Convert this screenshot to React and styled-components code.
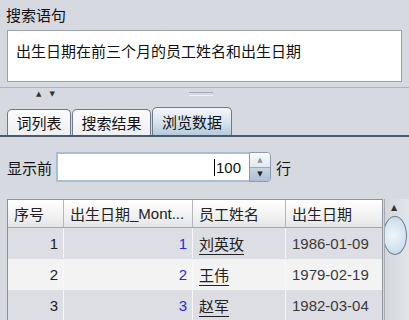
import React from "react";
import styled, { createGlobalStyle } from "styled-components";

const GlobalStyle = createGlobalStyle`
  body {
    margin: 0;
    background: #d6d9e0;
    font-family: "Noto Sans CJK SC", "Liberation Sans", sans-serif;
    color: #222;
  }
`;

const Page = styled.div`
  width: 409px;
  height: 320px;
  overflow: hidden;
  background: #d6d9e0;
`;

const SectionLabel = styled.div`
  height: 30px;
  line-height: 30px;
  padding-left: 6px;
  font-size: 15px;
  color: #111;
`;

const QueryBox = styled.div`
  box-sizing: border-box;
  height: 52px;
  margin: 0 7px 0 7px;
  padding: 9px 8px;
  background: #fff;
  border: 1px solid #9ca2aa;
  font-size: 15px;
  line-height: 22px;
  color: #111;
`;

const Splitter = styled.div`
  margin-top: 5px;
  height: 12px;
  border-top: 1px solid #aeb2b9;
  display: flex;
  align-items: center;
`;

const Arrows = styled.div`
  display: flex;
  gap: 8px;
  margin-left: 36px;
  font-size: 7px;
  color: #333;
  line-height: 7px;
  font-family: "DejaVu Sans", sans-serif;
`;

const Grip = styled.div`
  margin-left: 134px;
  width: 24px;
  height: 2px;
  border-top: 1px solid #a7abb3;
  border-bottom: 1px solid #f1f2f4;
`;

const TabRow = styled.div`
  margin-top: 4px;
  height: 31px;
  display: flex;
  align-items: flex-end;
  padding-left: 7px;
  border-bottom: 2px solid #4a5a6e;
`;

const Tab = styled.div`
  box-sizing: border-box;
  height: ${(p) => (p.$active ? 28 : 26)}px;
  width: ${(p) => p.$w}px;
  margin-right: 1px;
  border: 1px solid #6f7a88;
  border-bottom: none;
  border-radius: 5px 5px 0 0;
  background: ${(p) =>
    p.$active
      ? "linear-gradient(#f2f6fa, #d6e3ee 55%, #b6cadc)"
      : "linear-gradient(#fdfdfd, #eeeff1)"};
  font-size: 15px;
  line-height: ${(p) => (p.$active ? 28 : 26)}px;
  text-align: center;
  color: #111;
`;

const Controls = styled.div`
  display: flex;
  align-items: center;
  margin-top: 15px;
  padding-left: 7px;
  height: 30px;
`;

const InlineLabel = styled.span`
  font-size: 15px;
  color: #111;
  margin-right: ${(p) => p.$mr || 0}px;
  margin-left: ${(p) => p.$ml || 0}px;
`;

const NumberInput = styled.div`
  box-sizing: border-box;
  width: 193px;
  height: 30px;
  background: #fff;
  border: 2px solid #a9bed3;
  border-right: none;
  display: flex;
  align-items: center;
  justify-content: flex-end;
  padding-right: 8px;
  font-family: "Liberation Sans", sans-serif;
  font-size: 15px;
  color: #111;
`;

const Caret = styled.span`
  display: inline-block;
  width: 1px;
  height: 17px;
  background: #000;
  margin-right: 1px;
`;

const Spinner = styled.div`
  box-sizing: border-box;
  width: 22px;
  height: 30px;
  border: 1px solid #8c9cae;
  border-radius: 0 4px 4px 0;
  display: flex;
  flex-direction: column;
  overflow: hidden;
`;

const SpinButton = styled.div`
  flex: 1;
  display: flex;
  align-items: center;
  justify-content: center;
  font-size: 7px;
  font-family: "DejaVu Sans", sans-serif;
  color: ${(p) => (p.$down ? "#222" : "#8895a4")};
  background: ${(p) =>
    p.$down ? "linear-gradient(#c9d6e2, #aebfd0)" : "linear-gradient(#fafbfc, #e2e8ee)"};
  border-top: ${(p) => (p.$down ? "1px solid #9aaabb" : "none")};
`;

const TableArea = styled.div`
  display: flex;
  margin-top: 17px;
  padding-left: 7px;
`;

const Grid = styled.div`
  box-sizing: border-box;
  width: 377px;
  height: 130px;
  border: 1px solid #8d939b;
  border-bottom: none;
  background: #d6d9e0;
`;

const Row = styled.div`
  display: grid;
  grid-template-columns: 56px 129px 93px 96px;
  height: ${(p) => (p.$head ? 28 : 31)}px;
  background: ${(p) =>
    p.$head ? "linear-gradient(#ffffff, #f1f1f2 60%, #e4e5e7)" : p.$alt ? "#f3f3f4" : "#dcdee3"};
  border-bottom: 1px solid ${(p) => (p.$head ? "#a3a7ad" : "transparent")};
  box-sizing: border-box;
`;

const Cell = styled.div`
  box-sizing: border-box;
  padding: 0 ${(p) => (p.$right ? 5 : 6)}px;
  display: flex;
  align-items: center;
  justify-content: ${(p) => (p.$right ? "flex-end" : "flex-start")};
  border-right: 1px solid ${(p) => (p.$head ? "#b3b6bb" : "#f7f7f8")};
  font-size: 15px;
  white-space: nowrap;
  overflow: hidden;
  color: ${(p) => p.$color || "#222"};
  font-family: ${(p) =>
    p.$num ? '"Liberation Sans", sans-serif' : '"Noto Sans CJK SC", sans-serif'};
  text-decoration: ${(p) => (p.$link ? "underline" : "none")};
  text-underline-offset: 4px;
  &:last-child {
    border-right: none;
  }
`;

const ScrollBar = styled.div`
  margin-left: 1px;
  width: 25px;
  height: 130px;
  border-left: 1px solid #a6abb2;
  background: linear-gradient(90deg, #d3d7dd, #e2e5e9);
  position: relative;
  overflow: hidden;
`;

const ScrollUp = styled.div`
  height: 16px;
  font-size: 8px;
  font-family: "DejaVu Sans", sans-serif;
  color: #333;
  display: flex;
  justify-content: center;
  align-items: center;
  padding-right: 6px;
`;

const Thumb = styled.div`
  position: absolute;
  top: 17px;
  left: -2px;
  width: 22px;
  height: 37px;
  border-radius: 50%;
  border: 1px solid #6e7f92;
  background: radial-gradient(circle at 40% 50%, #eef5fb, #cfe0ee 70%, #b8cee2);
`;

const rows = [
  { n: 1, m: 1, name: "刘英玫", date: "1986-01-09" },
  { n: 2, m: 2, name: "王伟", date: "1979-02-19" },
  { n: 3, m: 3, name: "赵军", date: "1982-03-04" },
];

export default function App() {
  return (
    <Page>
      <GlobalStyle />
      <SectionLabel>搜索语句</SectionLabel>
      <QueryBox>出生日期在前三个月的员工姓名和出生日期</QueryBox>
      <Splitter>
        <Arrows>
          <span>▲</span>
          <span>▼</span>
        </Arrows>
        <Grip />
      </Splitter>
      <TabRow>
        <Tab $w={64}>词列表</Tab>
        <Tab $w={79}>搜索结果</Tab>
        <Tab $w={80} $active>
          浏览数据
        </Tab>
      </TabRow>
      <Controls>
        <InlineLabel $mr={4}>显示前</InlineLabel>
        <NumberInput>
          <Caret />
          100
        </NumberInput>
        <Spinner>
          <SpinButton>▲</SpinButton>
          <SpinButton $down>▼</SpinButton>
        </Spinner>
        <InlineLabel $ml={5}>行</InlineLabel>
      </Controls>
      <TableArea>
        <Grid>
          <Row $head>
            <Cell $head>序号</Cell>
            <Cell $head>
              出生日期<span style={{ fontFamily: "Liberation Sans" }}>_Mont...</span>
            </Cell>
            <Cell $head>员工姓名</Cell>
            <Cell $head>出生日期</Cell>
          </Row>
          {rows.map((r, i) => (
            <Row key={r.n} $alt={i % 2 === 1}>
              <Cell $right $num>
                {r.n}
              </Cell>
              <Cell $right $num $color="#2b2bd6">
                {r.m}
              </Cell>
              <Cell $link>{r.name}</Cell>
              <Cell $num $color="#3a3a3a">
                {r.date}
              </Cell>
            </Row>
          ))}
        </Grid>
        <ScrollBar>
          <ScrollUp>▲</ScrollUp>
          <Thumb />
        </ScrollBar>
      </TableArea>
    </Page>
  );
}
